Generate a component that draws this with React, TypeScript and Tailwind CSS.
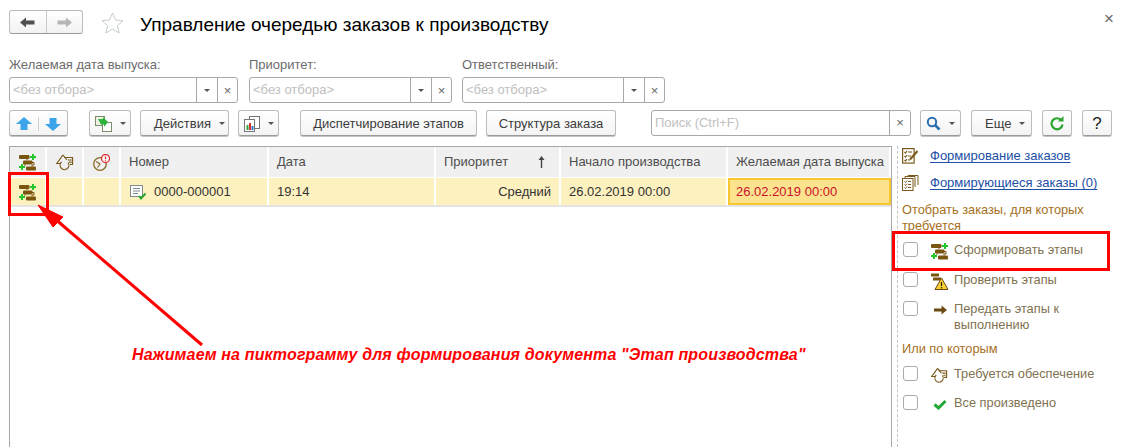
const cols = "grid-cols-[37px_37px_37px_148px_167px_125px_167px_163px]"

function NavArrow({ flip, color }: { flip?: boolean; color: string }) {
  return (
    <svg width="15" height="11" viewBox="0 0 15 11" className={flip ? "rotate-180" : ""}>
      <path d="M0 5.5 L6 0.5 V3.5 H14.5 V7.5 H6 V10.5 Z" fill={color} />
    </svg>
  )
}

function Caret() {
  return <span className="ml-[8px] inline-block h-0 w-0 border-x-[3px] border-t-[3px] border-x-transparent border-t-[#555]" />
}

function Btn({ children, className = "" }: { children: React.ReactNode; className?: string }) {
  return (
    <div className={`flex h-[26px] items-center justify-center rounded-[3px] border border-[#bcbcbc] border-b-[#9a9a9a] bg-gradient-to-b from-white to-[#f3f3f3] pt-px text-[13px] text-[#3c3c3c] shadow-[0_1px_0_#c4c4c4] ${className}`}>
      {children}
    </div>
  )
}

function StageIcon() {
  return (
    <svg width="17" height="17" viewBox="0 0 17 17">
      <path d="M8 4 V6 M13 8.5 H15 V11 H13 V12.5 M6 10.5 V12" fill="none" stroke="#7a5510" />
      <rect x="0" y="1" width="10.5" height="4" rx="1" fill="#7a5510" />
      <rect x="4" y="6.5" width="9.5" height="4" rx="1" fill="#7a5510" />
      <rect x="7" y="12.5" width="10" height="4" rx="1" fill="#7a5510" />
      <path d="M13 0 H15 V2 H17 V4 H15 V6 H13 V4 H11 V2 H13 Z" fill="#22c52a" />
      <path d="M2 10 H4 V12 H6 V14 H4 V16 H2 V14 H0 V12 H2 Z" fill="#22c52a" />
    </svg>
  )
}

function SupplyIcon() {
  return (
    <svg width="18" height="17" viewBox="0 0 18 17" fill="none" stroke="#7a5a1c" strokeWidth="1.2">
      <path d="M7 1 L0.8 9.5 H5 M7 1 L11 6" />
      <path d="M5.5 8 A4.4 4.4 0 1 0 12 8.5" />
      <path d="M8 3.5 H16.5 V10.5 H14 M12 6 H15.5 M13 8.2 H15.5" />
    </svg>
  )
}

function ClockIcon() {
  return (
    <svg width="17" height="17" viewBox="0 0 17 17">
      <circle cx="7" cy="10" r="6.3" fill="none" stroke="#8a6a2c" strokeWidth="1.3" />
      <path d="M3 7.5 L7 10 L4.5 13.5" fill="none" stroke="#8a6a2c" strokeWidth="1.2" />
      <circle cx="12.5" cy="4.5" r="4" fill="#fff" stroke="#e0312f" strokeWidth="1.3" />
      <path d="M12.5 2.5 V5 M12.5 5.8 V6.8" stroke="#e0312f" strokeWidth="1.3" />
    </svg>
  )
}

function DocCheck() {
  return (
    <svg width="17" height="15" viewBox="0 0 17 15">
      <rect x="0.5" y="0.5" width="12" height="11" fill="#fff" stroke="#7d8a92" />
      <path d="M3 3.5 H10 M3 6 H10 M3 8.5 H8" stroke="#7d8a92" />
      <path d="M9 11 L11 13.5 L15.5 8.5" fill="none" stroke="#2aa52f" strokeWidth="2" />
    </svg>
  )
}

function Field({ label, width }: { label: string; width: string }) {
  return (
    <div className={width}>
      <div className="mb-[4px] h-[16px] text-[13px] leading-[16px] text-[#6c6c6c]">{label}</div>
      <div className="flex h-[26px] rounded-[3px] border border-[#a8a8a8] bg-white text-[13px]">
        <div className="flex-1 pl-[3px] leading-[24px] text-[#c0c0c0]">&lt;без отбора&gt;</div>
        <div className="flex w-[21px] items-center justify-center border-l border-[#a8a8a8]">
          <span className="h-0 w-0 border-x-[3px] border-t-[3px] border-x-transparent border-t-[#555]" />
        </div>
        <div className="flex w-[20px] items-center justify-center border-l border-[#a8a8a8] leading-none text-[#666]">×</div>
      </div>
    </div>
  )
}

const headCell = "flex items-center whitespace-nowrap border-r-2 border-white bg-[#f0f0f0] px-[8px] text-[13px] text-[#4d4d4d]"
const rowCell = "flex items-center whitespace-nowrap border-r-2 border-white bg-[#fdf1c0] px-[8px] pt-px text-[13px] text-[#333]"

function CheckRow({ icon, label, className = "" }: { icon: React.ReactNode; label: React.ReactNode; className?: string }) {
  return (
    <div className={`ml-[1px] flex text-[12.8px] leading-[16px] text-[#7f7250] ${className}`}>
      <span className="h-[15px] w-[15px] shrink-0 rounded-[3px] border border-[#ababab] bg-white" />
      <span className="ml-[13px] flex w-[17px] shrink-0 justify-center pt-[1px]">{icon}</span>
      <span className="ml-[6px]">{label}</span>
    </div>
  )
}

export default function App() {
  return (
    <div className="relative h-[447px] w-[1127px] overflow-hidden bg-white font-['Liberation_Sans',Arial,sans-serif]">
      {/* шапка */}
      <div className="flex h-[57px] px-[9px] pt-[10px]">
        <div className="flex h-[24px] w-[74px] rounded-[3px] border border-[#bcbcbc] border-b-[#9a9a9a] bg-gradient-to-b from-white to-[#f2f2f2]">
          <div className="flex flex-1 items-center justify-center border-r border-[#c8c8c8]"><NavArrow color="#505050" /></div>
          <div className="flex flex-1 items-center justify-center"><NavArrow flip color="#b5b5b5" /></div>
        </div>
        <svg width="23" height="22" viewBox="0 0 23 22" className="ml-[18px] mt-[2px]">
          <path d="M11.5 1 L14.6 8 L22 8.7 L16.4 13.6 L18.1 21 L11.5 17.1 L4.9 21 L6.6 13.6 L1 8.7 L8.4 8 Z" fill="#fff" stroke="#c6ccd0" />
        </svg>
        <h1 className="ml-[16px] mt-px text-[19px] font-normal leading-[28px] text-black">Управление очередью заказов к производству</h1>
        <div className="ml-auto mr-[4px] mt-[2px] text-[17px] leading-[14px] text-[#666]">×</div>
      </div>

      {/* отборы */}
      <div className="flex px-[9px]">
        <Field label="Желаемая дата выпуска:" width="w-[229px]" />
        <div className="w-[11px]" />
        <Field label="Приоритет:" width="w-[203px]" />
        <div className="w-[10px]" />
        <Field label="Ответственный:" width="w-[203px]" />
      </div>

      {/* панель команд */}
      <div className="mt-[7px] flex px-[9px]">
        <Btn className="w-[59px]">
          <div className="flex flex-1 justify-center border-r border-[#d0d0d0]">
            <svg width="16" height="14" viewBox="0 0 16 14"><path d="M8 0 L16 7 H11.5 V13 H4.5 V7 H0 Z" fill="#3ca4e8" /></svg>
          </div>
          <div className="flex flex-1 justify-center">
            <svg width="16" height="14" viewBox="0 0 16 14"><path d="M8 14 L16 7 H11.5 V1 H4.5 V7 H0 Z" fill="#3ca4e8" /></svg>
          </div>
        </Btn>
        <Btn className="ml-[21px] w-[42px]">
          <svg width="17" height="16" viewBox="0 0 17 16">
            <rect x="0.5" y="0.5" width="9" height="9" fill="#eef3e6" stroke="#7b8c6a" />
            <rect x="7.5" y="6.5" width="9" height="9" fill="#fff" stroke="#7b8c6a" />
            <path d="M3 3 L8 3 L8 1 L13 6 L9 11 L9 8.5 L6 8.5 Z" fill="#2fb13a" />
          </svg>
          <Caret />
        </Btn>
        <Btn className="ml-[9px] w-[89px] !justify-start pl-[13px]">Действия<Caret /></Btn>
        <Btn className="ml-[9px] w-[41px]">
          <svg width="16" height="16" viewBox="0 0 16 16">
            <rect x="5.5" y="0.5" width="10" height="12" fill="#fff" stroke="#777" />
            <rect x="0.5" y="3.5" width="10" height="12" fill="#fff" stroke="#777" />
            <rect x="2.5" y="9" width="2" height="5" fill="#2fa33a" />
            <rect x="5" y="7" width="2" height="7" fill="#d33" />
            <rect x="7.5" y="10" width="2" height="4" fill="#2e78c7" />
          </svg>
          <Caret />
        </Btn>
        <Btn className="ml-[21px] w-[177px]">Диспетчирование этапов</Btn>
        <Btn className="ml-[9px] w-[130px]">Структура заказа</Btn>
        <div className="ml-[35px] flex h-[26px] w-[260px] rounded-[3px] border border-[#a8a8a8] bg-white text-[13px]">
          <div className="flex-1 pl-[3px] leading-[24px] text-[#c0c0c0]">Поиск (Ctrl+F)</div>
          <div className="flex w-[21px] items-center justify-center border-l border-[#a8a8a8] text-[#666]">×</div>
        </div>
        <Btn className="ml-[9px] w-[41px]">
          <svg width="15" height="15" viewBox="0 0 15 15" fill="none" stroke="#2d6fb0">
            <circle cx="6" cy="6" r="4.2" strokeWidth="2" />
            <path d="M9 9 L13.5 13.5" strokeWidth="2.6" />
          </svg>
          <Caret />
        </Btn>
        <Btn className="ml-[10px] w-[61px] !justify-start pl-[13px]">Еще<Caret /></Btn>
        <Btn className="ml-[10px] w-[30px]">
          <svg width="14" height="15" viewBox="0 0 14 15" fill="none">
            <path d="M11.5 4.5 A5.5 5.5 0 1 0 12.5 8.5" stroke="#2aa52f" strokeWidth="2.2" />
            <path d="M8 5.5 H13.5 V0 Z" fill="#2aa52f" />
          </svg>
        </Btn>
        <Btn className="ml-[10px] w-[30px] !text-[17px] !text-[#222]">?</Btn>
      </div>

      {/* таблица и панель */}
      <div className="flex px-[9px] pt-[10px]">
        <div className="h-[301px] w-[883px] border-x border-t border-[#a8a8a8]">
          <div className={`grid h-[31px] border-b border-white ${cols}`}>
            <div className={`${headCell} justify-center !px-0`}><StageIcon /></div>
            <div className={`${headCell} justify-center !px-0`}><SupplyIcon /></div>
            <div className={`${headCell} justify-center !px-0`}><ClockIcon /></div>
            <div className={headCell}>Номер</div>
            <div className={headCell}>Дата</div>
            <div className={`${headCell} justify-between`}>
              Приоритет
              <svg width="7" height="12" viewBox="0 0 7 12" className="mr-[6px]">
                <path d="M3.5 0 L6.5 4 H4.2 V12 H2.8 V4 H0.5 Z" fill="#444" />
              </svg>
            </div>
            <div className={headCell}>Начало производства</div>
            <div className={`${headCell} border-r-0`}>Желаемая дата выпуска</div>
          </div>
          <div className={`grid h-[29px] border-b-2 border-[#e4e4e4] ${cols}`}>
            <div className={`${rowCell} justify-center !px-0`}><StageIcon /></div>
            <div className={rowCell} />
            <div className={rowCell} />
            <div className={rowCell}>
              <span className="ml-[1px] mr-[7px] flex"><DocCheck /></span>0000-000001
            </div>
            <div className={rowCell}>19:14</div>
            <div className={`${rowCell} justify-end`}>Средний</div>
            <div className={rowCell}>26.02.2019 00:00</div>
            <div className="flex items-center whitespace-nowrap border-2 border-[#f8c62f] bg-[#fde38d] px-[6px] pt-px text-[13px] text-[#c8102e]">26.02.2019 00:00</div>
          </div>
        </div>

        <div className="ml-[5px] h-[301px] flex-1 border-l border-dashed border-[#c4c4c4] pl-[4px] pt-px">
          <div className="flex h-[18px] items-center text-[13px]">
            <svg width="17" height="16" viewBox="0 0 17 16" fill="none" stroke="#7a5a1c" strokeWidth="1.2">
              <rect x="0.6" y="0.6" width="11.5" height="14.5" />
              <path d="M2.5 4 L3.5 5 L5 3 M6 4 H10 M2.5 8 L3.5 9 L5 7 M6 8 H9 M2.5 12 L3.5 13 L5 11 M6 12 H8" />
              <path d="M8 11.5 L15.5 3" strokeWidth="2" />
            </svg>
            <span className="ml-[11px] text-[#1c4fa5] underline underline-offset-[2px]">Формирование заказов</span>
          </div>
          <div className="mt-[9px] flex h-[18px] items-center text-[13px]">
            <svg width="17" height="16" viewBox="0 0 17 16" fill="none" stroke="#7a5a1c">
              <path d="M3 3 V1.5 H13 V12 M6 1 V0.5 H16 V10" />
              <rect x="0.5" y="3.5" width="10.5" height="12" fill="#fff" />
              <path d="M2.5 6.5 L3.5 7.5 L5 5.5 M6 6.5 H9 M2.5 9.5 L3.5 10.5 L5 8.5 M6 9.5 H9 M2.5 12.5 L3.5 13.5 L5 11.5 M6 12.5 H9" />
            </svg>
            <span className="ml-[11px] text-[#1c4fa5] underline underline-offset-[2px]">Формирующиеся заказы (0)</span>
          </div>
          <div className="mt-[10px] text-[12.8px] leading-[16px] text-[#a5701c]">Отобрать заказы, для которых<br />требуется</div>
          <CheckRow className="mt-[8px]" icon={<StageIcon />} label="Сформировать этапы" />
          <CheckRow
            className="mt-[12px]"
            icon={
              <svg width="17" height="17" viewBox="0 0 17 17">
                <rect x="0" y="0.5" width="8" height="3" fill="#7a5510" />
                <rect x="2" y="4.5" width="8" height="3" fill="#7a5510" />
                <path d="M10.5 5 L17 16.5 H4 Z" fill="#f8d12f" stroke="#6b4a12" />
                <path d="M10.5 9 V13 M10.5 14 V15.5" stroke="#222" strokeWidth="1.2" />
              </svg>
            }
            label="Проверить этапы"
          />
          <CheckRow
            className="mt-[11px]"
            icon={
              <svg width="14" height="10" viewBox="0 0 14 10" className="mt-[3px]">
                <path d="M14 5 L8.5 0.5 V3.5 H1 V6.5 H8.5 V9.5 Z" fill="#6b4a12" />
              </svg>
            }
            label={<>Передать этапы к<br />выполнению</>}
          />
          <div className="mt-[8px] text-[12.8px] leading-[16px] text-[#a5701c]">Или по которым</div>
          <CheckRow className="mt-[9px]" icon={<SupplyIcon />} label="Требуется обеспечение" />
          <CheckRow
            className="mt-[11px]"
            icon={
              <svg width="14" height="11" viewBox="0 0 14 11" className="mt-[3px]">
                <path d="M1.5 5.5 L5.5 9 L12.5 2" fill="none" stroke="#25a83a" strokeWidth="3" />
              </svg>
            }
            label="Все произведено"
          />
        </div>
      </div>

      {/* пометки поверх скриншота */}
      <div className="absolute left-[8px] top-[172px] h-[44px] w-[41px] border-[3px] border-[#ff0000]" />
      <div className="absolute left-[892px] top-[231px] h-[40px] w-[218px] border-[3px] border-[#ff0000]" />
      <svg className="absolute left-0 top-0" width="1127" height="447" viewBox="0 0 1127 447" fill="none">
        <path d="M202 345 L54 218" stroke="#ff0000" strokeWidth="3" />
        <path d="M38 205 L63 217 L53 227 Z" fill="#ff0000" stroke="#ff0000" />
      </svg>
      <div className="absolute left-[132px] top-[347px] whitespace-nowrap text-[16px] font-bold italic leading-[16px] tracking-[0.15px] text-[#ff0000]">
        Нажимаем на пиктограмму для формирования документа "Этап производства"
      </div>
    </div>
  )
}
